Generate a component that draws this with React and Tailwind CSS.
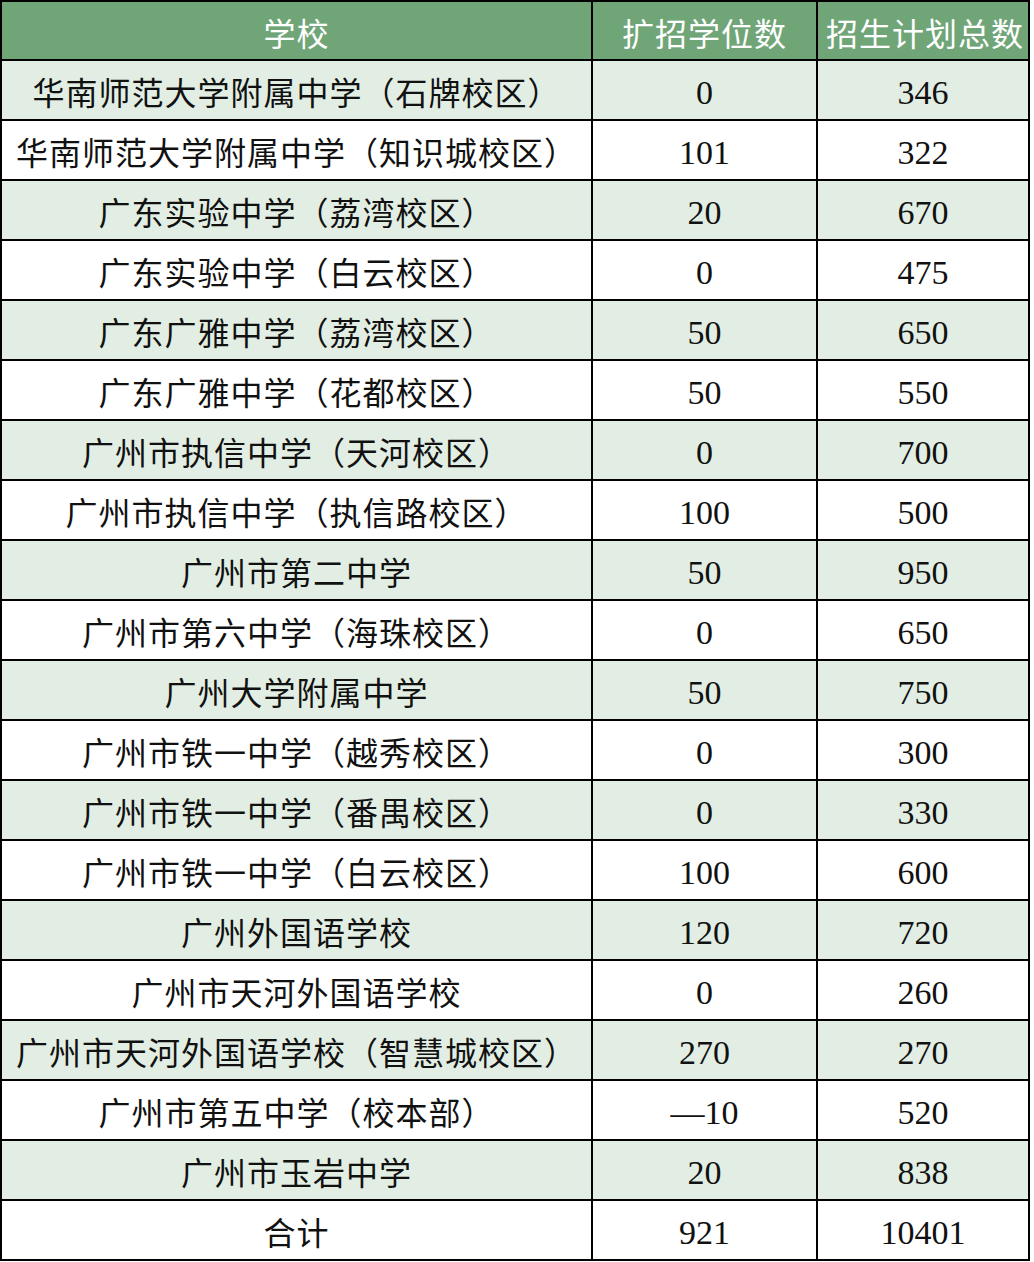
import React from 'react';

const rows = [
    ['华南师范大学附属中学（石牌校区）', '0', '346'],
    ['华南师范大学附属中学（知识城校区）', '101', '322'],
    ['广东实验中学（荔湾校区）', '20', '670'],
    ['广东实验中学（白云校区）', '0', '475'],
    ['广东广雅中学（荔湾校区）', '50', '650'],
    ['广东广雅中学（花都校区）', '50', '550'],
    ['广州市执信中学（天河校区）', '0', '700'],
    ['广州市执信中学（执信路校区）', '100', '500'],
    ['广州市第二中学', '50', '950'],
    ['广州市第六中学（海珠校区）', '0', '650'],
    ['广州大学附属中学', '50', '750'],
    ['广州市铁一中学（越秀校区）', '0', '300'],
    ['广州市铁一中学（番禺校区）', '0', '330'],
    ['广州市铁一中学（白云校区）', '100', '600'],
    ['广州外国语学校', '120', '720'],
    ['广州市天河外国语学校', '0', '260'],
    ['广州市天河外国语学校（智慧城校区）', '270', '270'],
    ['广州市第五中学（校本部）', '—10', '520'],
    ['广州市玉岩中学', '20', '838'],
    ['合计', '921', '10401'],
];

const cjk = "font-['Noto_Sans_CJK_SC',sans-serif]";
const num = "font-['Liberation_Serif','Noto_Sans_CJK_SC',serif]";

const App = () => {
    return (
        <div className="w-[1034px] h-[1262px] bg-white">
            <div className="w-[1030px] bg-black p-[2px] grid grid-cols-[589px_223px_210px] gap-[2px]">
                {/* header */}
                <div className={`h-[57px] pt-[3px] bg-[#70a578] text-white text-[32px] tracking-[1px] flex items-center justify-center ${cjk}`}>学校</div>
                <div className={`h-[57px] pt-[3px] bg-[#70a578] text-white text-[32px] tracking-[1px] flex items-center justify-center ${cjk}`}>扩招学位数</div>
                <div className={`h-[57px] pt-[3px] pl-[4px] bg-[#70a578] text-white text-[32px] tracking-[1px] flex items-center justify-center whitespace-nowrap ${cjk}`}>招生计划总数</div>

                {rows.map((r, i) => {
                    const bg = i % 2 === 0 ? 'bg-[#e2eee3]' : 'bg-white';
                    return (
                        <React.Fragment key={i}>
                            <div className={`h-[58px] pt-[2px] ${bg} text-[#111] text-[32px] tracking-[1px] flex items-center justify-center whitespace-nowrap ${cjk}`}>
                                {r[0]}
                            </div>
                            <div className={`h-[58px] pt-[4px] ${bg} text-[#111] text-[34px] flex items-center justify-center ${num}`}>
                                {r[1]}
                            </div>
                            <div className={`h-[58px] pt-[4px] ${bg} text-[#111] text-[34px] flex items-center justify-center ${num}`}>
                                {r[2]}
                            </div>
                        </React.Fragment>
                    );
                })}
            </div>
        </div>
    );
};

export default App;
